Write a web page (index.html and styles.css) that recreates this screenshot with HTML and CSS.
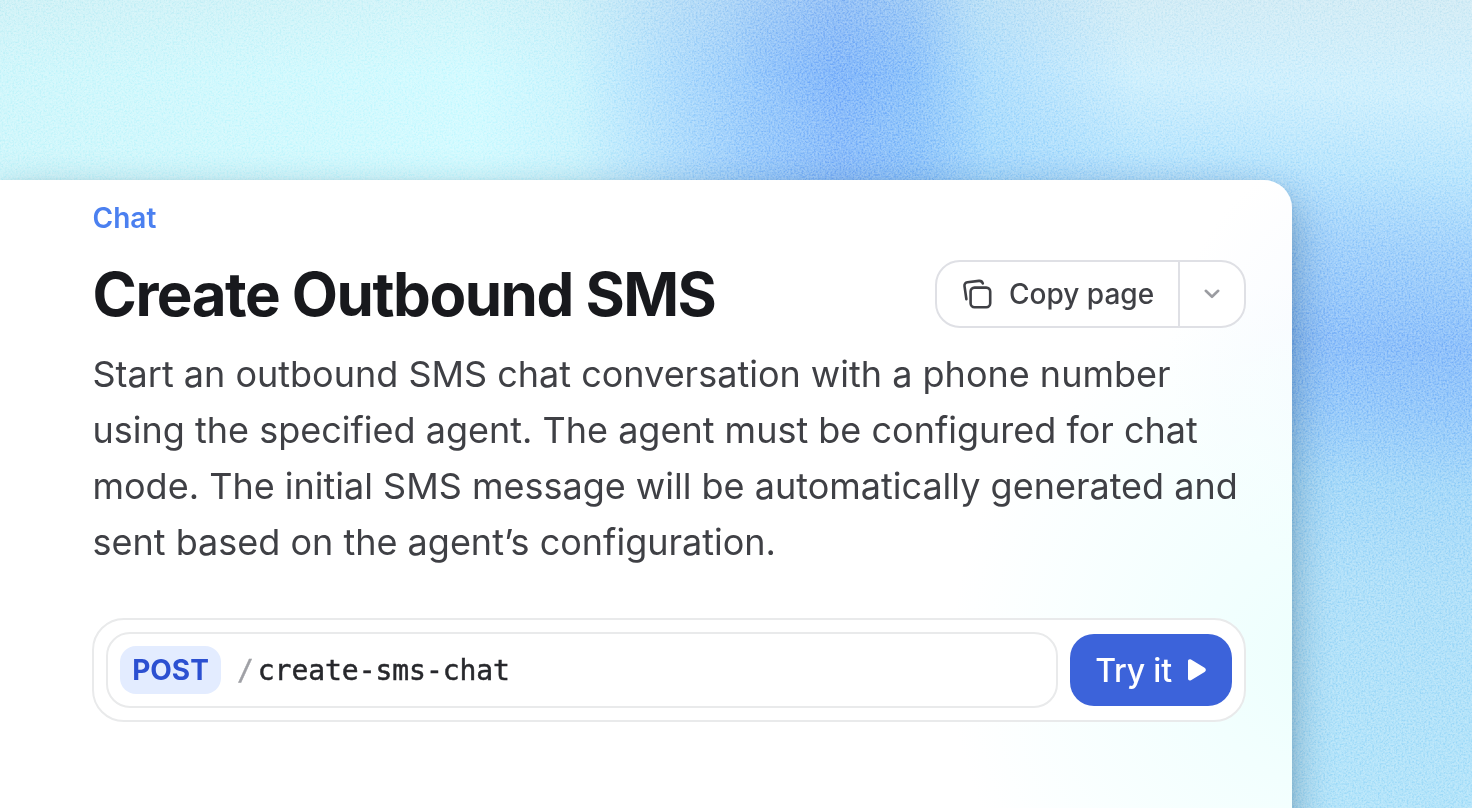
FILE: index.html
```html
<!DOCTYPE html>
<html lang="en">
<head>
<meta charset="UTF-8">
<meta name="viewport" content="width=device-width, initial-scale=1.0">
<title>Create Outbound SMS</title>
<link rel="stylesheet" href="styles.css">
</head>
<body>
    <div class="wallpaper">
        <svg class="grain" width="100%" height="100%" aria-hidden="true">
            <filter id="noise" x="0" y="0" width="100%" height="100%" color-interpolation-filters="sRGB">
                <feTurbulence type="fractalNoise" baseFrequency="0.55" numOctaves="2" seed="4"/>
                <feColorMatrix values="2 0 0 0 -0.42  2 0 0 0 -0.42  2 0 0 0 -0.42  0 0 0 0 1"/>
            </filter>
            <rect width="100%" height="100%" filter="url(#noise)"/>
        </svg>
        <main class="card">
            <div class="section">Chat</div>
            <header class="heading">
                <h1>Create Outbound SMS</h1>
                <div class="copy">
                    <button class="copy-main">
                        <svg width="32" height="32" viewBox="0 0 32 32" fill="none" stroke="currentColor" stroke-width="2.6" stroke-linecap="round" stroke-linejoin="round">
                            <rect x="10.6" y="9.6" width="19.6" height="19.6" rx="3.9"/>
                            <path d="M6.4 21.2 4.5 8.1a3.4 3.4 0 0 1 2.9-3.9L18.9 2.9a3.7 3.7 0 0 1 3.9 2.5"/>
                        </svg>
                        <span>Copy page</span>
                    </button>
                    <button class="copy-more" aria-label="More">
                        <svg width="16" height="10" viewBox="0 0 16 10" fill="none" stroke="currentColor" stroke-width="2.6" stroke-linecap="round" stroke-linejoin="round">
                            <path d="m1.8 1.8 6.2 6 6.2-6"/>
                        </svg>
                    </button>
                </div>
            </header>
            <p class="description">Start an outbound SMS chat conversation with a phone number using the specified agent. The agent must be configured for chat mode. The initial SMS message will be automatically generated and sent based on the agent’s configuration.</p>
            <div class="endpoint">
                <div class="path">
                    <span class="method">POST</span>
                    <span class="slash">/</span>
                    <span class="route">create-sms-chat</span>
                </div>
                <button class="try">
                    <span>Try it</span>
                    <svg width="20" height="24" viewBox="0 0 20 24" fill="currentColor">
                        <path d="M1 3.2C1 1.5 2.5.8 4 1.6l13.6 8.2c1.7 1 1.7 3.3 0 4.3L4 22.2c-1.5.8-3 .1-3-1.6z"/>
                    </svg>
                </button>
            </div>
        </main>
    </div>
</body>
</html>
```
FILE: styles.css
```css
* {
    box-sizing: border-box;
}
body {
    margin: 0;
    font-family: Inter, sans-serif;
    color: #3f4045;
}
button {
    font: inherit;
    color: inherit;
    background: none;
    border: none;
    padding: 0;
    cursor: pointer;
}
.wallpaper {
    position: relative;
    height: 808px;
    padding-top: 180px;
    overflow: hidden;
    background:
        linear-gradient(rgba(208, 228, 234, 0.28), rgba(205, 240, 245, 0) 75px),
        radial-gradient(ellipse 120px 130px at 845px 0, rgba(105, 165, 250, 0.45), rgba(105, 165, 250, 0)),
        linear-gradient(88deg, #cef6fb 0, #d1faff 500px, #caf3fd 600px, #acdafc 705px, #97c9fb 780px, #88bbfa 865px, rgba(138, 193, 250, 0.92) 940px, rgba(158, 212, 252, 0.65) 1010px, rgba(190, 228, 253, 0) 1160px),
        linear-gradient(184deg, #d2eef9 0, #ceeffd 100px, #b9e5fd 175px, #a0d0fb 255px, #8cbffa 350px, #93c7fa 410px, #a4d8f9 490px, #aedff9 590px, #b3e5fa 100%);
}
/* film grain over the gradient */
.grain {
    position: absolute;
    inset: 0;
    mix-blend-mode: soft-light;
    opacity: 0.42;
}
.card {
    position: relative;
    width: 1292px;
    height: 700px;
    padding: 20px 46px 0 92px;
    border-radius: 0 28px 0 0;
    background:
        radial-gradient(circle at 1330px 480px, #ecfffd 0, rgba(240, 255, 254, 0.8) 150px, rgba(255, 255, 255, 0) 380px),
        radial-gradient(circle at 1400px 180px, #f5f9ff 0, #fff 230px);
    box-shadow: 0 16px 40px rgba(20, 60, 95, 0.4), 0 2px 6px rgba(20, 60, 95, 0.08);
}
.section {
    padding-left: 0.6px;
    font-size: 28px;
    line-height: 36px;
    font-weight: 600;
    color: #4b80f0;
}
.heading {
    display: flex;
    justify-content: space-between;
    align-items: center;
    height: 68px;
    margin-top: 24px;
}
.heading h1 {
    margin: 0;
    padding-left: 0.5px;
    font-size: 60px;
    line-height: 72px;
    font-weight: 700;
    letter-spacing: -1.5px;
    color: #18191d;
}
.copy {
    display: flex;
    width: 311px;
    height: 68px;
    border: 2px solid #dfe0e5;
    border-radius: 25px;
    background-color: #fff;
}
.copy-main {
    display: flex;
    align-items: center;
    gap: 17px;
    width: 243px;
    padding-left: 23px;
    border-right: 2px solid #dfe0e5;
    font-size: 28px;
    font-weight: 500;
}
.copy-more {
    display: flex;
    flex: 1;
    align-items: center;
    justify-content: center;
    color: #9b9ca1;
}
.description {
    margin: 18px 0 0;
    padding-left: 0.5px;
    font-size: 36px;
    line-height: 56px;
}
.endpoint {
    display: flex;
    gap: 12px;
    height: 104px;
    margin-top: 48px;
    padding: 12px;
    border: 2px solid #e9eaeb;
    border-radius: 32px;
    background-color: #fff;
}
.path {
    display: flex;
    flex: 1;
    align-items: center;
    height: 76px;
    padding-left: 12px;
    border: 2px solid #e9eaeb;
    border-radius: 24px;
}
.method {
    width: 101px;
    border-radius: 16px;
    background-color: #e3ecff;
    color: #2c50d1;
    font-size: 28px;
    line-height: 48px;
    font-weight: 700;
    text-align: center;
}
.slash,
.route {
    font-family: "DejaVu Sans Mono", monospace;
    font-size: 28px;
    letter-spacing: -0.05px;
}
.slash {
    margin-left: 16px;
    color: #9fa0a5;
    -webkit-text-stroke: 0.4px #9fa0a5;
}
.route {
    margin-left: 4px;
    color: #27282c;
    -webkit-text-stroke: 0.5px #27282c;
}
.try {
    display: flex;
    align-items: center;
    justify-content: center;
    gap: 15px;
    width: 162px;
    height: 72px;
    margin-top: 2px;
    border-radius: 24px;
    background-color: #3c63da;
    color: #fff;
    font-size: 32px;
    font-weight: 500;
    letter-spacing: -0.2px;
}
```
